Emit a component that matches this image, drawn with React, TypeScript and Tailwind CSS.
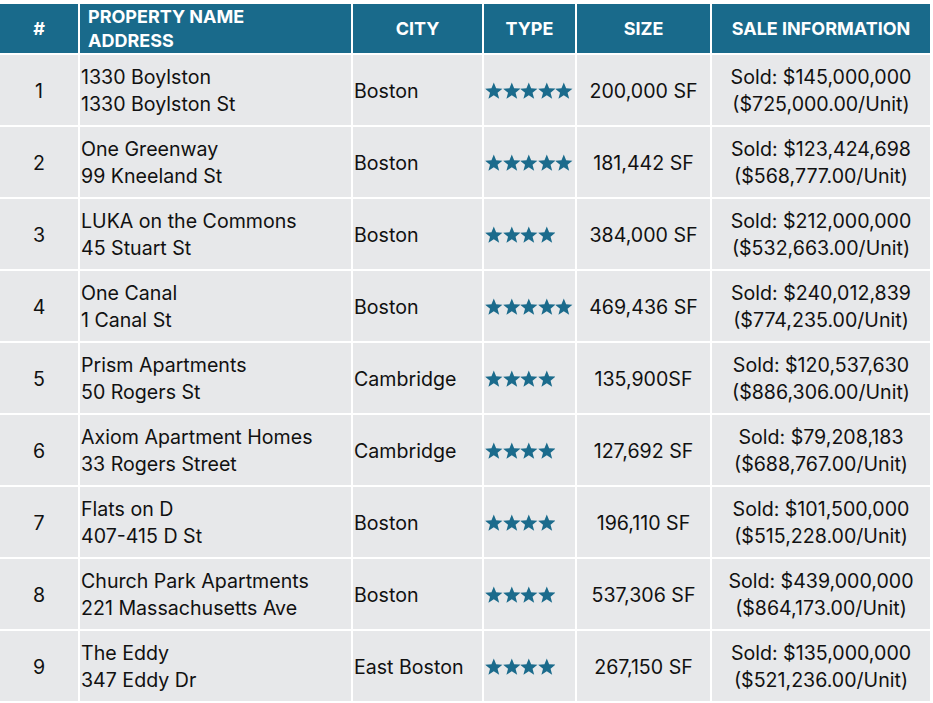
const rows = [
  { n: 1, name: "1330 Boylston", addr: "1330 Boylston St", city: "Boston", stars: 5, size: "200,000 SF", sold: "Sold: $145,000,000", unit: "($725,000.00/Unit)" },
  { n: 2, name: "One Greenway", addr: "99 Kneeland St", city: "Boston", stars: 5, size: "181,442 SF", sold: "Sold: $123,424,698", unit: "($568,777.00/Unit)" },
  { n: 3, name: "LUKA on the Commons", addr: "45 Stuart St", city: "Boston", stars: 4, size: "384,000 SF", sold: "Sold: $212,000,000", unit: "($532,663.00/Unit)" },
  { n: 4, name: "One Canal", addr: "1 Canal St", city: "Boston", stars: 5, size: "469,436 SF", sold: "Sold: $240,012,839", unit: "($774,235.00/Unit)" },
  { n: 5, name: "Prism Apartments", addr: "50 Rogers St", city: "Cambridge", stars: 4, size: "135,900SF", sold: "Sold: $120,537,630", unit: "($886,306.00/Unit)" },
  { n: 6, name: "Axiom Apartment Homes", addr: "33 Rogers Street", city: "Cambridge", stars: 4, size: "127,692 SF", sold: "Sold: $79,208,183", unit: "($688,767.00/Unit)" },
  { n: 7, name: "Flats on D", addr: "407-415 D St", city: "Boston", stars: 4, size: "196,110 SF", sold: "Sold: $101,500,000", unit: "($515,228.00/Unit)" },
  { n: 8, name: "Church Park Apartments", addr: "221 Massachusetts Ave", city: "Boston", stars: 4, size: "537,306 SF", sold: "Sold: $439,000,000", unit: "($864,173.00/Unit)" },
  { n: 9, name: "The Eddy", addr: "347 Eddy Dr", city: "East Boston", stars: 4, size: "267,150 SF", sold: "Sold: $135,000,000", unit: "($521,236.00/Unit)" },
];

function Star() {
  return (
    <svg width="17.6" height="17.6" viewBox="1 1 22 22" className="shrink-0">
      <polygon
        points="12,1.5 14.9,8.9 22.8,9.3 16.7,14.3 18.7,22 12,17.7 5.3,22 7.3,14.3 1.2,9.3 9.1,8.9"
        fill="#1b6b8c"
      />
    </svg>
  );
}

export default function App() {
  const head = "bg-[#196a8b] text-white font-bold text-[18px] leading-[24px] flex items-center";
  const cell = "bg-[#e7e8ea] flex items-center pt-[2px]";

  return (
    <div className="w-[933px] h-[703px] bg-white pt-[4px] text-[#111] font-['Inter','Liberation_Sans',sans-serif]">
      <div className="grid grid-cols-[78px_271px_129px_91px_133px_218px] grid-rows-[49px_repeat(9,70px)] gap-[2px]">
        <div className={`${head} justify-center pt-[1px]`}>#</div>
        <div className={`${head} pl-[8px]`}>
          <div>
            PROPERTY NAME
            <br />
            ADDRESS
          </div>
        </div>
        <div className={`${head} justify-center pt-[1px]`}>CITY</div>
        <div className={`${head} justify-center pt-[1px]`}>TYPE</div>
        <div className={`${head} justify-center pt-[1px]`}>SIZE</div>
        <div className={`${head} justify-center pt-[1px]`}>SALE INFORMATION</div>

        {rows.map((r) => (
          <div key={r.n} className="contents text-[19.6px] leading-[27px]">
            <div className={`${cell} justify-center`}>{r.n}</div>
            <div className={`${cell} pl-[1px]`}>
              <div>
                {r.name}
                <br />
                {r.addr}
              </div>
            </div>
            <div className={`${cell} pl-[1px]`}>{r.city}</div>
            <div className={`${cell} pl-[1px]`}>
              {Array.from({ length: r.stars }).map((_, i) => (
                <Star key={i} />
              ))}
            </div>
            <div className={`${cell} justify-center`}>{r.size}</div>
            <div className={`${cell} justify-center text-center`}>
              <div>
                {r.sold}
                <br />
                {r.unit}
              </div>
            </div>
          </div>
        ))}
      </div>
    </div>
  );
}
